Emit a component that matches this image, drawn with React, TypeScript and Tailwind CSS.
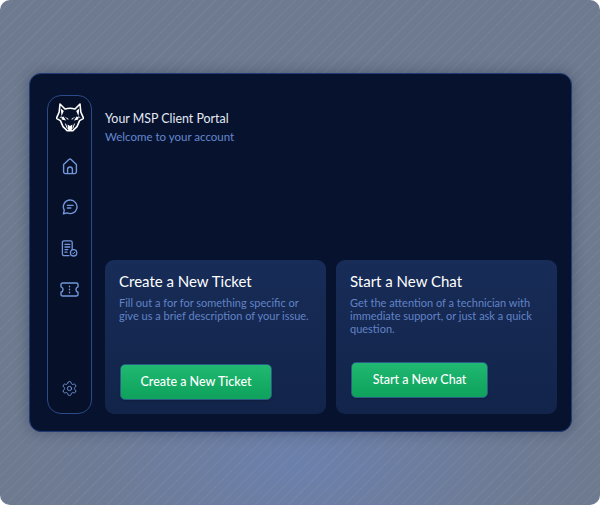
import { Settings } from "lucide-react";

function HomeIcon() {
  return (
    <svg width="16" height="17" viewBox="0 0 16 17" fill="none" stroke="currentColor" strokeWidth="1.4" strokeLinecap="round" strokeLinejoin="round">
      <path d="M1.6 6.6 6.9 1.6a1.6 1.6 0 0 1 2.2 0l5.3 5v7.2a1.8 1.8 0 0 1-1.8 1.8H3.4a1.8 1.8 0 0 1-1.8-1.8V6.6Z" />
      <path d="M5.6 15.4v-4a2.4 2.4 0 0 1 4.8 0v4" />
    </svg>
  );
}

function ChatIcon() {
  return (
    <svg width="16" height="16" viewBox="0 0 16 16" fill="none" stroke="currentColor" strokeWidth="1.4" strokeLinecap="round" strokeLinejoin="round">
      <path d="M8.2 1a6.8 6.8 0 1 1-3 12.9l-3.8.9.9-3.6A6.8 6.8 0 0 1 8.2 1Z" />
      <path d="M5.4 6.4h5.6M5.4 9h3.4" />
    </svg>
  );
}

function DocIcon() {
  return (
    <svg width="17" height="17" viewBox="0 0 17 17" fill="none" stroke="currentColor" strokeWidth="1.3" strokeLinecap="round" strokeLinejoin="round">
      <path d="M8 15.7H3a1.6 1.6 0 0 1-1.6-1.6V2.4A1.6 1.6 0 0 1 3 .8h6.6a1.6 1.6 0 0 1 1.6 1.6v7" />
      <path d="M4 4.4h4.8M4 7h4.8M4 9.6h2.8M4 12.2h2" />
      <circle cx="12.6" cy="12.8" r="3.2" />
      <path d="M11.3 12.8l1 1 1.6-1.7" strokeWidth="1" />
    </svg>
  );
}

function TicketIcon() {
  return (
    <svg width="19" height="15" viewBox="0 0 19 15" fill="none" stroke="currentColor" strokeWidth="1.4" strokeLinecap="round" strokeLinejoin="round">
      <path d="M2.6 1h13.8A1.6 1.6 0 0 1 18 2.6v2.2a2.8 2.8 0 0 0 0 5.4v2.2a1.6 1.6 0 0 1-1.6 1.6H2.6A1.6 1.6 0 0 1 1 12.4v-2.2a2.8 2.8 0 0 0 0-5.4V2.6A1.6 1.6 0 0 1 2.6 1Z" />
      <path d="M9.5 4.2v.5M9.5 7.2v.5M9.5 10.2v.5" />
    </svg>
  );
}

function WolfLogo() {
  return (
    <svg width="28" height="29" viewBox="0 0 28 29" fill="none">
      {/* ears and outer head */}
      <path
        d="M4 1 L9 6 Q14 4.4 19 6 L24 1 L24.8 9 L27.6 15.4 L23.6 17.6 L21 23.6 L16.6 27.8 H11.4 L7 23.6 L4.4 17.6 L0.4 15.4 L3.2 9 Z"
        stroke="white"
        strokeWidth="1.6"
        strokeLinejoin="round"
      />
      {/* cheeks */}
      <path d="M4.8 5.4 L7.8 8 L5.8 12.4 L3.2 15.2 L7.4 13.4 L10 17.6 L5.8 16.4 Z" fill="white" />
      <path d="M23.2 5.4 L20.2 8 L22.2 12.4 L24.8 15.2 L20.6 13.4 L18 17.6 L22.2 16.4 Z" fill="white" />
      {/* eyes */}
      <path d="M8.4 13.4 L12.4 15.8 L12.2 17 Z M19.6 13.4 L15.6 15.8 L15.8 17 Z" fill="white" />
      {/* snout */}
      <path d="M11.6 21.4 L14 23 L16.4 21.4 L15.8 27 H12.2 Z" fill="white" />
      <path d="M9.4 20.6 L11.4 25.6 M18.6 20.6 L16.6 25.6" stroke="white" strokeWidth="1" />
    </svg>
  );
}

const NAV_TOP = [
  <HomeIcon key="home" />,
  <ChatIcon key="chat" />,
  <DocIcon key="doc" />,
  <TicketIcon key="ticket" />,
];

const CARDS = [
  {
    title: "Create a New Ticket",
    text: "Fill out a for for something specific or give us a brief description of your issue.",
    action: "Create a New Ticket",
    pad: "pb-[14px]",
    width: "w-[152px]",
  },
  {
    title: "Start a New Chat",
    text: "Get the attention of a technician with immediate support, or just ask a quick question.",
    action: "Start a New Chat",
    pad: "pb-[16px]",
    width: "w-[137px]",
  },
];

export default function App() {
  return (
    <div className="w-[600px] h-[505px] rounded-[10px] flex items-center justify-center pl-px font-['Lato',sans-serif] bg-[repeating-linear-gradient(135deg,rgba(255,255,255,0.035)_0px,rgba(255,255,255,0.035)_1.5px,transparent_1.5px,transparent_8px),radial-gradient(ellipse_300px_150px_at_50%_92%,#6b80ac_0%,#6e7b95_70%,#6e7a8f_100%)] bg-[#6e7a8f]">
      <div className="w-[543px] h-[359px] rounded-[12px] border border-[#1f3a75] bg-[#07132e] pt-[21px] pb-[17px] pl-[17px] pr-[14px] flex gap-[13px] shadow-[0_0_14px_rgba(20,30,60,0.35)]">
        {/* Sidebar */}
        <nav className="w-[45px] rounded-[14px] border border-[#2b4a8a] bg-[#061029] text-[#7396da] flex flex-col items-center pt-[7px] pb-[16px]">
          <WolfLogo />
          <div className="flex flex-col items-center mt-[26px] gap-[25px]">
            {NAV_TOP.map((icon, i) => (
              <div key={i} className="h-[16px] flex items-center justify-center">
                {icon}
              </div>
            ))}
          </div>
          <div className="mt-auto">
            <Settings size={17} strokeWidth={1.3} />
          </div>
        </nav>

        {/* Main */}
        <main className="flex-1 flex flex-col justify-between">
          <div className="pt-[16px]">
            <h1 className="text-[12.4px] leading-[16px] font-normal text-[#e4e9f4]">
              Your MSP Client Portal
            </h1>
            <p className="text-[11.5px] leading-[16px] mt-[2px] text-[#6487cf]">
              Welcome to your account
            </p>
          </div>

          <div className="grid grid-cols-2 gap-[10px]">
            {CARDS.map((card) => (
              <section
                key={card.title}
                className={`h-[154px] rounded-[9px] bg-[linear-gradient(180deg,#172c57,#12244a)] pt-[12px] pl-[14px] pr-[10px] flex flex-col ${card.pad}`}
              >
                <h2 className="text-[15px] leading-[18px] font-normal text-white">
                  {card.title}
                </h2>
                <p className="text-[11px] leading-[13px] mt-[6px] text-[#6283c6]">
                  {card.text}
                </p>
                <button
                  className={`mt-auto ml-px h-[36px] ${card.width} rounded-[5px] border border-[#2b5a86] bg-[linear-gradient(180deg,#20b872,#0ea25c)] text-white text-[12.5px] font-medium shadow-[0_1px_2px_rgba(0,0,0,0.2)]`}
                >
                  {card.action}
                </button>
              </section>
            ))}
          </div>
        </main>
      </div>
    </div>
  );
}
